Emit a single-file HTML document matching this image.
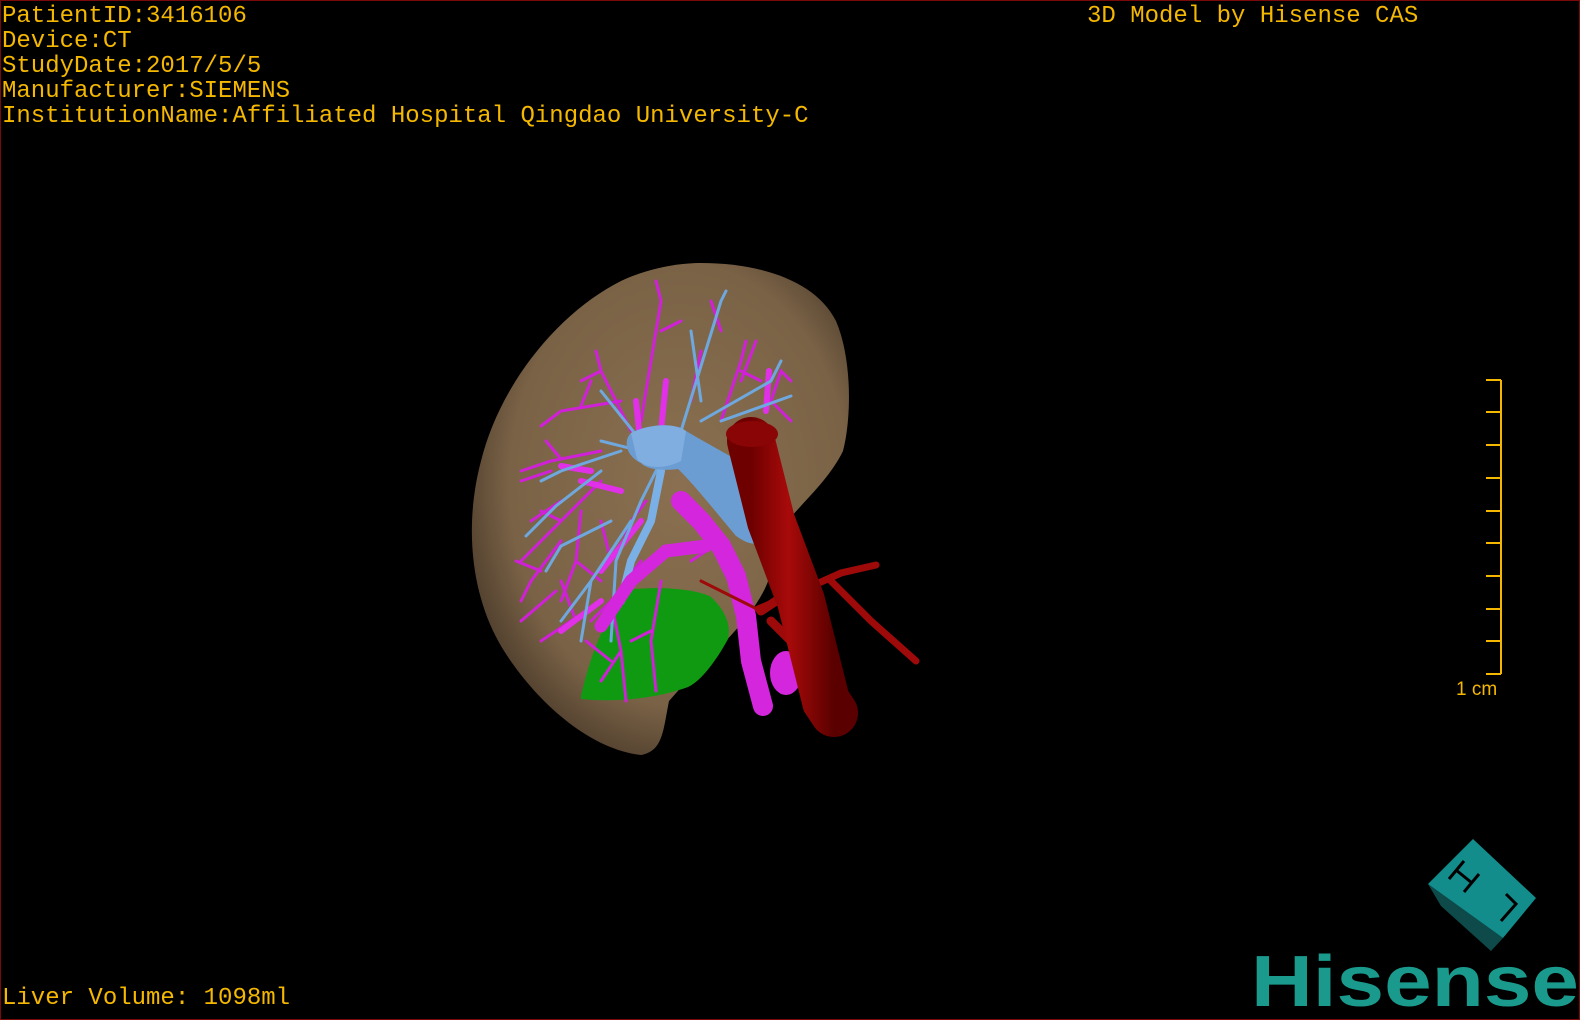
<!DOCTYPE html>
<html><head><meta charset="utf-8"><style>
html,body{margin:0;padding:0;background:#000;}
#c{position:relative;width:1580px;height:1020px;background:#000;overflow:hidden;box-sizing:border-box;border:1px solid #7a0a0a;}
.t{position:absolute;font-family:"Liberation Mono",monospace;font-size:24px;color:#f5b800;line-height:25px;white-space:pre;letter-spacing:0;}
</style></head><body><div id="c">
<div class="t" style="left:1px;top:3px;">PatientID:3416106
Device:CT
StudyDate:2017/5/5
Manufacturer:SIEMENS
InstitutionName:Affiliated Hospital Qingdao University-C</div>
<div class="t" style="left:1086px;top:3px;">3D Model by Hisense CAS</div>
<div class="t" style="left:1px;top:985px;">Liver Volume: 1098ml</div>
<svg width="1580" height="1020" style="position:absolute;left:0;top:0">
<defs>
<radialGradient id="lg" cx="0.55" cy="0.45" r="0.6">
<stop offset="0" stop-color="#8a7050"/><stop offset="0.75" stop-color="#7a6246"/><stop offset="1" stop-color="#4d3d2c"/></radialGradient>
<linearGradient id="ao" x1="0" x2="1"><stop offset="0" stop-color="#6e0000"/><stop offset="0.45" stop-color="#a80a0a"/><stop offset="1" stop-color="#5a0000"/></linearGradient>
</defs>
<path d="M700,262 C760,262 815,280 835,320 C852,360 850,420 842,450 C825,485 790,510 772,540 C780,600 720,640 668,700 C662,730 662,750 640,754 C585,748 530,695 500,645 C468,590 464,520 480,460 C500,380 560,310 620,280 C650,266 680,262 700,262Z" fill="url(#lg)"/>
<path d="M580,695 C590,650 610,600 633,588 C670,585 700,590 710,596 C725,610 730,625 727,638 C715,660 700,680 687,686 C660,696 620,702 580,698Z" fill="#0f9a12"/>
<g fill="none" stroke-linecap="round">
<g stroke="#d020d8" stroke-width="3">
<path d="M630,430 L600,370 L595,350 M600,370 L580,380 M640,420 L660,300 L655,280 M660,330 L680,320 M620,400 L560,410 L540,425 M580,405 L590,380 M600,450 L550,460 L520,470 M560,458 L545,440 M600,480 L560,520 L520,560 M560,520 L540,510 M580,510 L575,560 L560,600 M575,560 L600,580 M600,520 L610,560 M640,560 L610,600 L590,620 M610,600 L620,650 L625,700 M620,650 L600,680 M660,580 L650,640 L655,690 M650,630 L630,640 M600,600 L570,620 L540,640 M575,620 L560,580 M720,420 L740,360 L745,340 M740,370 L760,380 M770,400 L780,370 L790,380 M770,400 L790,420 M690,400 L700,350 M560,540 L530,580 L520,600 M540,570 L515,560 M550,470 L520,480 M530,520 L560,500 M555,590 L520,620 M690,560 L720,540 M615,560 L630,520 L645,500 M585,640 L610,660 M740,380 L755,340 M720,330 L710,300"/>
</g>
<g stroke="#e030e8" stroke-width="6">
<path d="M640,450 L635,400 M660,430 L665,380 M765,410 L768,370 M620,490 L580,480 M640,520 L600,570 M590,470 L560,465 M600,600 L560,630"/>
</g>
<g stroke="#6fa8de" stroke-width="3">
<path d="M680,430 L720,300 L725,290 M700,400 L690,330 M640,440 L600,390 M620,450 L560,470 L540,480 M600,470 L555,505 L525,535 M660,460 L640,500 L615,560 L610,640 M630,520 L590,580 L560,620 M590,580 L580,640 M640,450 L600,440 M720,420 L790,395 M700,420 L770,380 L780,360 M610,520 L560,545 L545,570"/>
</g>
<path d="M660,470 L650,520 L630,560 L620,600" stroke="#7ab0e5" stroke-width="8"/>
<path d="M680,500 L700,520 L720,545 L735,575 L745,615 L750,660 L762,705" stroke="#d426dc" stroke-width="20"/>
<path d="M600,625 L630,580 L665,550 L705,545" stroke="#d426dc" stroke-width="13"/>
</g>
<path d="M630,432 C650,422 675,422 685,430 C710,445 740,460 752,470 C762,490 764,520 760,542 C748,545 740,538 735,535 C710,505 690,480 677,468 C660,470 645,468 640,462 C625,455 622,440 630,432Z" fill="#6c9dd2"/>
<path d="M630,432 C650,422 675,422 685,430 L680,460 C660,470 642,466 636,458Z" fill="#80aee0"/>
<ellipse cx="785" cy="672" rx="16" ry="22" fill="#d426dc"/>
<g fill="none" stroke-linecap="round">
<path d="M757,608 L800,590 L840,572 L875,564 M830,580 L870,620 L915,660" stroke="#9e0a0a" stroke-width="7"/>
<path d="M700,580 L740,600 L760,610" stroke="#9e0a0a" stroke-width="3"/>
<path d="M760,610 L775,600 L790,590 M770,620 L790,640 L800,660" stroke="#9e0a0a" stroke-width="9"/>
<path d="M750,440 L770,520 L800,600 L825,700 L833,712" stroke="url(#ao)" stroke-width="48"/>
</g>
<ellipse cx="751" cy="433" rx="26" ry="13" fill="#8a0505"/>
<g stroke="#f5b800" stroke-width="2" fill="none">
<path d="M1500,379 L1500,673"/>
<path d="M1485,379H1500M1485,411H1500M1485,444H1500M1485,477H1500M1485,510H1500M1485,542H1500M1485,575H1500M1485,608H1500M1485,640H1500M1485,673H1500"/>
</g>
<text x="1455" y="694" font-family="Liberation Sans,sans-serif" font-size="19" fill="#f5b800">1 cm</text>
<polygon points="1427,883 1502,937 1490,950 1440,905" fill="#0e4a4a"/>
<polygon points="1472,838 1535,897 1502,937 1427,883" fill="#138c8c"/>
<path d="M1463,860 L1448,878 M1478,873 L1463,891 M1455,869 L1471,882 M1505,893 L1515,903 L1500,920" stroke="#000" stroke-width="3" fill="none"/>
<text x="1250" y="1005" font-family="Liberation Sans,sans-serif" font-weight="bold" font-size="72" fill="#1a9a8c" textLength="328" lengthAdjust="spacingAndGlyphs">Hisense</text>
</svg>
</div></body></html>
